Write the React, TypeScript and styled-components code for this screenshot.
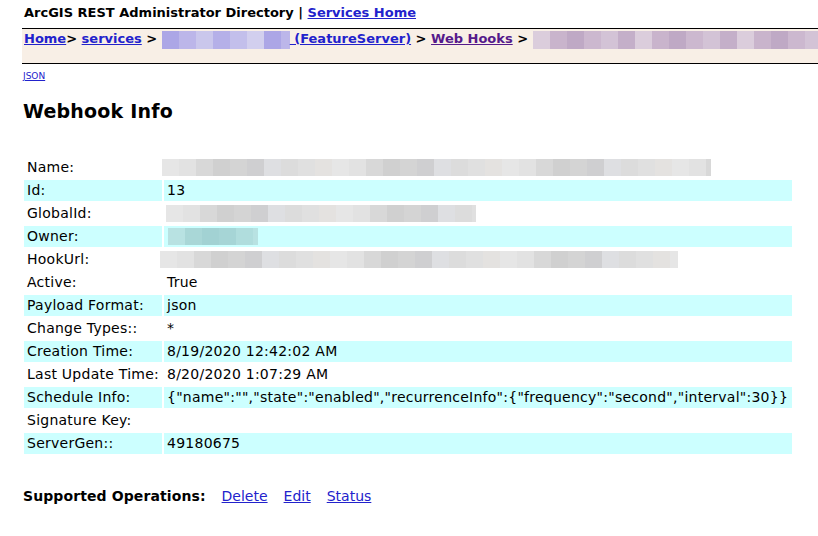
import styled, { createGlobalStyle } from 'styled-components';

const GlobalStyle = createGlobalStyle`
  html, body {
    margin: 0;
    padding: 0;
    background: #ffffff;
  }
  body {
    font-family: "DejaVu Sans", Verdana, sans-serif;
    color: #000000;
  }
`;

const Page = styled.div`
  padding: 5px 0 0 22px;
  width: 796px;
  overflow: hidden;
`;

const TopTitle = styled.div`
  font-size: 13px;
  font-weight: bold;
  line-height: 16px;
  padding-left: 2px;
  margin-bottom: 7px;
  white-space: nowrap;
`;

const Link = styled.a<{ $visited?: boolean }>`
  color: ${(p) => (p.$visited ? '#551a8b' : '#2222cc')};
  text-decoration: underline;
  cursor: pointer;
`;

const Crumbs = styled.div`
  background: #f8efe6;
  border-top: 1px solid #000;
  border-bottom: 1px solid #000;
  box-sizing: border-box;
  height: 36px;
  padding: 2px 0 0 2px;
  font-size: 13px;
  font-weight: bold;
  line-height: 16px;
  white-space: nowrap;
  display: flex;
  align-items: flex-start;
`;

const Blocks = styled.span<{ $h: number }>`
  display: flex;
  height: ${(p) => p.$h}px;
  flex-shrink: 0;
`;

const Block = styled.span<{ $c: string; $w: number }>`
  display: block;
  width: ${(p) => p.$w}px;
  height: 100%;
  background: ${(p) => p.$c};
`;

const JsonLink = styled(Link)`
  display: inline-block;
  font-size: 9px;
  line-height: 11px;
  margin: 6px 0 0 1px;
`;

const Heading = styled.h2`
  font-size: 19px;
  font-weight: bold;
  line-height: 23px;
  letter-spacing: 0.2px;
  margin: 17px 0 32px 1px;
`;

const Table = styled.table`
  border-collapse: separate;
  border-spacing: 2px;
  width: 772px;
  font-size: 14px;
  letter-spacing: 0.25px;
  line-height: 17px;
`;

const Row = styled.tr<{ $shade: boolean }>`
  background: ${(p) => (p.$shade ? '#ccffff' : 'transparent')};
`;

const Cell = styled.td<{ $label?: boolean }>`
  padding: 2px 3px;
  width: ${(p) => (p.$label ? '132px' : 'auto')};
  white-space: nowrap;
  height: 17px;
  vertical-align: middle;
`;

const Ops = styled.div`
  margin: 32px 0 0 1px;
  font-size: 14px;
  line-height: 16px;
  white-space: nowrap;
  display: flex;
  gap: 16px;
`;

const OpsLabel = styled.b`
  letter-spacing: 0.1px;
`;

const pixelate = (width: number, shades: string[], bw = 17) => {
  const out: { c: string; w: number }[] = [];
  let left = width;
  let i = 0;
  while (left > 0) {
    const w = Math.min(bw, left);
    out.push({ c: shades[(i * 7 + 3) % shades.length], w });
    left -= w;
    i++;
  }
  return out;
};

const grays = ['#e2e2e2', '#d4d4d4', '#dcdcdc', '#e6e6e6', '#d0d0d0', '#dedfe2', '#e4e2e0', '#d8d8d8', '#cfcfd1', '#e0e0e0'];
const teals = ['#a9d7d7', '#b0dddd', '#a2d2d3', '#b8e2e2', '#a6d5d6'];
const lavender = ['#b5b0e8', '#c3bfeb', '#d2cfee', '#aca6e6', '#bcb6e9', '#cac7ec'];
const mauve = ['#ccb8cf', '#d3c3d6', '#c4afc9', '#dbcddc', '#c9b4cc', '#bfa9c5'];

const Pixels = ({ width, shades, h, offset = 0 }: { width: number; shades: string[]; h: number; offset?: number }) => (
  <Blocks $h={h} style={{ marginLeft: offset }}>
    {pixelate(width, shades).map((b, i) => (
      <Block key={i} $c={b.c} $w={b.w} />
    ))}
  </Blocks>
);

const rows: { label: string; value: React.ReactNode; shade: boolean }[] = [
  { label: 'Name:', value: <Pixels width={549} shades={grays} h={17} offset={-5} />, shade: false },
  { label: 'Id:', value: '13', shade: true },
  { label: 'GlobalId:', value: <Pixels width={310} shades={grays} h={17} offset={-1} />, shade: false },
  { label: 'Owner:', value: <Pixels width={90} shades={teals} h={17} offset={1} />, shade: true },
  { label: 'HookUrl:', value: <Pixels width={518} shades={grays} h={17} offset={-7} />, shade: false },
  { label: 'Active:', value: 'True', shade: false },
  { label: 'Payload Format:', value: 'json', shade: true },
  { label: 'Change Types::', value: '*', shade: false },
  { label: 'Creation Time:', value: '8/19/2020 12:42:02 AM', shade: true },
  { label: 'Last Update Time:', value: '8/20/2020 1:07:29 AM', shade: false },
  {
    label: 'Schedule Info:',
    value: '{"name":"","state":"enabled","recurrenceInfo":{"frequency":"second","interval":30}}',
    shade: true,
  },
  { label: 'Signature Key:', value: '', shade: false },
  { label: 'ServerGen::', value: '49180675', shade: true },
];

export default function App() {
  return (
    <>
      <GlobalStyle />
      <Page>
        <TopTitle>
          ArcGIS REST Administrator Directory | <Link>Services Home</Link>
        </TopTitle>
        <Crumbs>
          <Link>Home</Link>
          <span>&gt;&nbsp;</span>
          <Link>services</Link>
          <span>&nbsp;&gt;&nbsp;</span>
          <Pixels width={128} shades={lavender} h={18} />
          <Link>&nbsp;(FeatureServer)</Link>
          <span>&nbsp;&gt;&nbsp;</span>
          <Link $visited>Web Hooks</Link>
          <span>&nbsp;&gt;&nbsp;</span>
          <Pixels width={300} shades={mauve} h={18} />
        </Crumbs>
        <JsonLink>JSON</JsonLink>
        <Heading>Webhook Info</Heading>
        <Table>
          <tbody>
            {rows.map((r) => (
              <Row key={r.label} $shade={r.shade}>
                <Cell $label>{r.label}</Cell>
                <Cell>{r.value}</Cell>
              </Row>
            ))}
          </tbody>
        </Table>
        <Ops>
          <OpsLabel>Supported Operations:</OpsLabel>
          <Link>Delete</Link>
          <Link>Edit</Link>
          <Link>Status</Link>
        </Ops>
      </Page>
    </>
  );
}
